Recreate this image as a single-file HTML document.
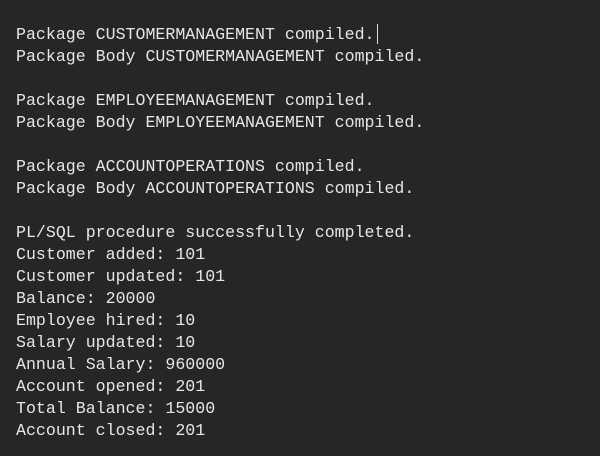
<!DOCTYPE html>
<html><head><style>
html,body{margin:0;padding:0;background:#262626;width:600px;height:456px;overflow:hidden}
pre{margin:0;position:absolute;left:16px;top:24px;font-family:"Liberation Mono",monospace;font-size:16.6px;line-height:22px;color:#e6e6e6}
.cur{position:absolute;left:377px;top:24px;width:1px;height:20px;background:#ddd}
</style></head><body>
<pre>Package CUSTOMERMANAGEMENT compiled.
Package Body CUSTOMERMANAGEMENT compiled.

Package EMPLOYEEMANAGEMENT compiled.
Package Body EMPLOYEEMANAGEMENT compiled.

Package ACCOUNTOPERATIONS compiled.
Package Body ACCOUNTOPERATIONS compiled.

PL/SQL procedure successfully completed.
Customer added: 101
Customer updated: 101
Balance: 20000
Employee hired: 10
Salary updated: 10
Annual Salary: 960000
Account opened: 201
Total Balance: 15000
Account closed: 201</pre>
<div class="cur"></div>
</body></html>
